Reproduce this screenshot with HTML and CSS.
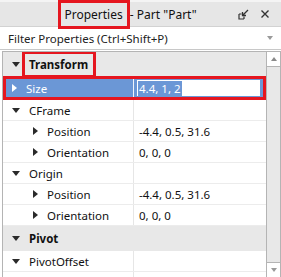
FILE: index.html
```html
<!DOCTYPE html>
<html lang="en">
  <head>
    <meta charset="utf-8" />
    <title>Properties</title>
    <link rel="stylesheet" href="styles.css">
  </head>
  <body>
    <!-- Window title -->
    <div class="titlebar">
      <div class="title"><span class="mark mark-title">Properties</span> - Part "Part"</div>
      <div class="tools">
        <svg width="11" height="11" viewBox="0 0 11 11"><path d="M1 5 V10 H6" fill="none" stroke="#333" stroke-width="1.2"/><path d="M1 5 H3.5 M6 10 V7.5" fill="none" stroke="#333" stroke-width="1.2"/><path d="M10 1 L4.5 6.5 M4.5 3 V6.5 H8" fill="none" stroke="#333" stroke-width="1.3"/></svg>
        <svg width="10" height="10" viewBox="0 0 10 10"><path d="M1.5 1.5 L8.5 8.5 M8.5 1.5 L1.5 8.5" stroke="#333" stroke-width="1.4"/></svg>
      </div>
    </div>

    <div class="filter">
      <span>Filter Properties (Ctrl+Shift+P)</span>
      <span class="tri-down small"></span>
    </div>

    <div class="panel">
      <div class="list">
        <div class="row header">
          <div class="name"><span class="tri-down"></span><span class="mark mark-head">Transform</span></div>
        </div>
        <div class="row selected">
          <div class="name"><span class="tri-right white"></span>Size</div>
          <div class="value"><span class="input"><span class="sel">4.4, 1, 2</span></span></div>
        </div>
        <div class="row">
          <div class="name"><span class="tri-down"></span>CFrame</div>
          <div class="value"></div>
        </div>
        <div class="row">
          <div class="name sub"><span class="tri-right"></span>Position</div>
          <div class="value">-4.4, 0.5, 31.6</div>
        </div>
        <div class="row">
          <div class="name sub"><span class="tri-right"></span>Orientation</div>
          <div class="value">0, 0, 0</div>
        </div>
        <div class="row">
          <div class="name"><span class="tri-down"></span>Origin</div>
          <div class="value"></div>
        </div>
        <div class="row">
          <div class="name sub"><span class="tri-right"></span>Position</div>
          <div class="value">-4.4, 0.5, 31.6</div>
        </div>
        <div class="row">
          <div class="name sub"><span class="tri-right"></span>Orientation</div>
          <div class="value">0, 0, 0</div>
        </div>
        <div class="row header tall">
          <div class="name"><span class="tri-down"></span>Pivot</div>
        </div>
        <div class="row">
          <div class="name"><span class="tri-down"></span>PivotOffset</div>
          <div class="value"></div>
        </div>
        <div class="row">
          <div class="name"></div>
        </div>
      </div>
      <div class="scrollbar">
        <div class="arrow"><span class="tri-up"></span></div>
        <div class="track"></div>
        <div class="arrow"><span class="tri-down small"></span></div>
      </div>
    </div>
  </body>
</html>
```

FILE: styles.css
```css
body {
  margin: 0;
  width: 281px;
  height: 277px;
  overflow: hidden;
  background: #ffffff;
  font-family: "Noto Sans", sans-serif;
  font-size: 11.5px;
  color: #111111;
}

/* Title bar */
.titlebar {
  display: flex;
  align-items: center;
  height: 27px;
  background: #e6e6e6;
  border-top: 2px solid #f4f4f4;
  border-bottom: 1px solid #d2d2d2;
  box-sizing: border-box;
}

.title {
  flex: 1;
  text-align: center;
  font-size: 12px;
  padding-left: 20px;
}

.tools {
  display: flex;
  align-items: center;
  gap: 11px;
  padding-right: 11px;
}

.mark {
  outline: 3px solid #e5161f;
}

.mark-title {
  padding: 3px 4px 3px 3px;
}

/* Filter box */
.filter {
  display: flex;
  align-items: center;
  justify-content: space-between;
  height: 23px;
  padding: 0 8px;
  border-bottom: 1px solid #c8c8c8;
  box-sizing: border-box;
  color: #222222;
}

/* Property grid */
.panel {
  display: flex;
  margin: 1px 0 0 2px;
  height: 225px;
  border: 1px solid #b4b4b4;
  border-right: none;
}

.list {
  flex: 1;
  overflow: hidden;
}

.row {
  display: flex;
  height: 21px;
  border-bottom: 1px solid #ececec;
  box-sizing: border-box;
}

.row.header {
  height: 24px;
  background: #e8e8e8;
  border-bottom: none;
  font-weight: bold;
}

.row.header.tall {
  height: 25px;
}

.name {
  display: flex;
  align-items: center;
  flex: none;
  width: 131px;
  padding-left: 9px;
  border-right: 1px solid #e6e6e6;
  box-sizing: border-box;
}

.header .name {
  border-right: none;
}

.name.sub {
  padding-left: 30px;
}

.name > span:first-child {
  margin-right: 9px;
}

.mark-head {
  margin-left: -4px;
  padding: 3px 5px 3px 4px;
}

.value {
  display: flex;
  align-items: center;
  flex: 1;
  padding-left: 5px;
}

.row.selected {
  height: 24px;
  background: #6b97d6;
  color: #ffffff;
  outline: 3px solid #e5161f;
  outline-offset: -3px;
  border-bottom: none;
}

.selected .name {
  border-right: 1px solid #f0f4fa;
}

.selected .value {
  padding: 3px 5px 3px 2px;
}

.input {
  display: flex;
  align-items: center;
  width: 100%;
  height: 100%;
  background: #ffffff;
  border: 1px solid #6b97d6;
  box-sizing: border-box;
  padding-left: 1px;
}

.sel {
  background: #6b97d6;
  color: #ffffff;
  padding: 0 1px;
}

/* Triangles */
.tri-down {
  width: 0;
  height: 0;
  border-left: 4px solid transparent;
  border-right: 4px solid transparent;
  border-top: 5px solid #2a2a2a;
}

.tri-up {
  width: 0;
  height: 0;
  border-left: 3px solid transparent;
  border-right: 3px solid transparent;
  border-bottom: 4px solid #8a8a8a;
}

.tri-right {
  width: 0;
  height: 0;
  border-top: 4px solid transparent;
  border-bottom: 4px solid transparent;
  border-left: 5px solid #2a2a2a;
}

.tri-right.white {
  border-left-color: #ffffff;
}

.small {
  border-left-width: 3px;
  border-right-width: 3px;
  border-top-color: #9a9a9a;
  border-top-width: 4px;
}

/* Scrollbar */
.scrollbar {
  display: flex;
  flex-direction: column;
  width: 13px;
  border-left: 1px solid #b4b4b4;
  border-right: 1px solid #b4b4b4;
  background: #e8e8e8;
}

.arrow {
  display: flex;
  align-items: center;
  justify-content: center;
  height: 14px;
  background: #ffffff;
  border-bottom: 1px solid #b4b4b4;
}

.arrow:last-child {
  border-bottom: none;
  border-top: 1px solid #b4b4b4;
}

.track {
  flex: 1;
}
```
